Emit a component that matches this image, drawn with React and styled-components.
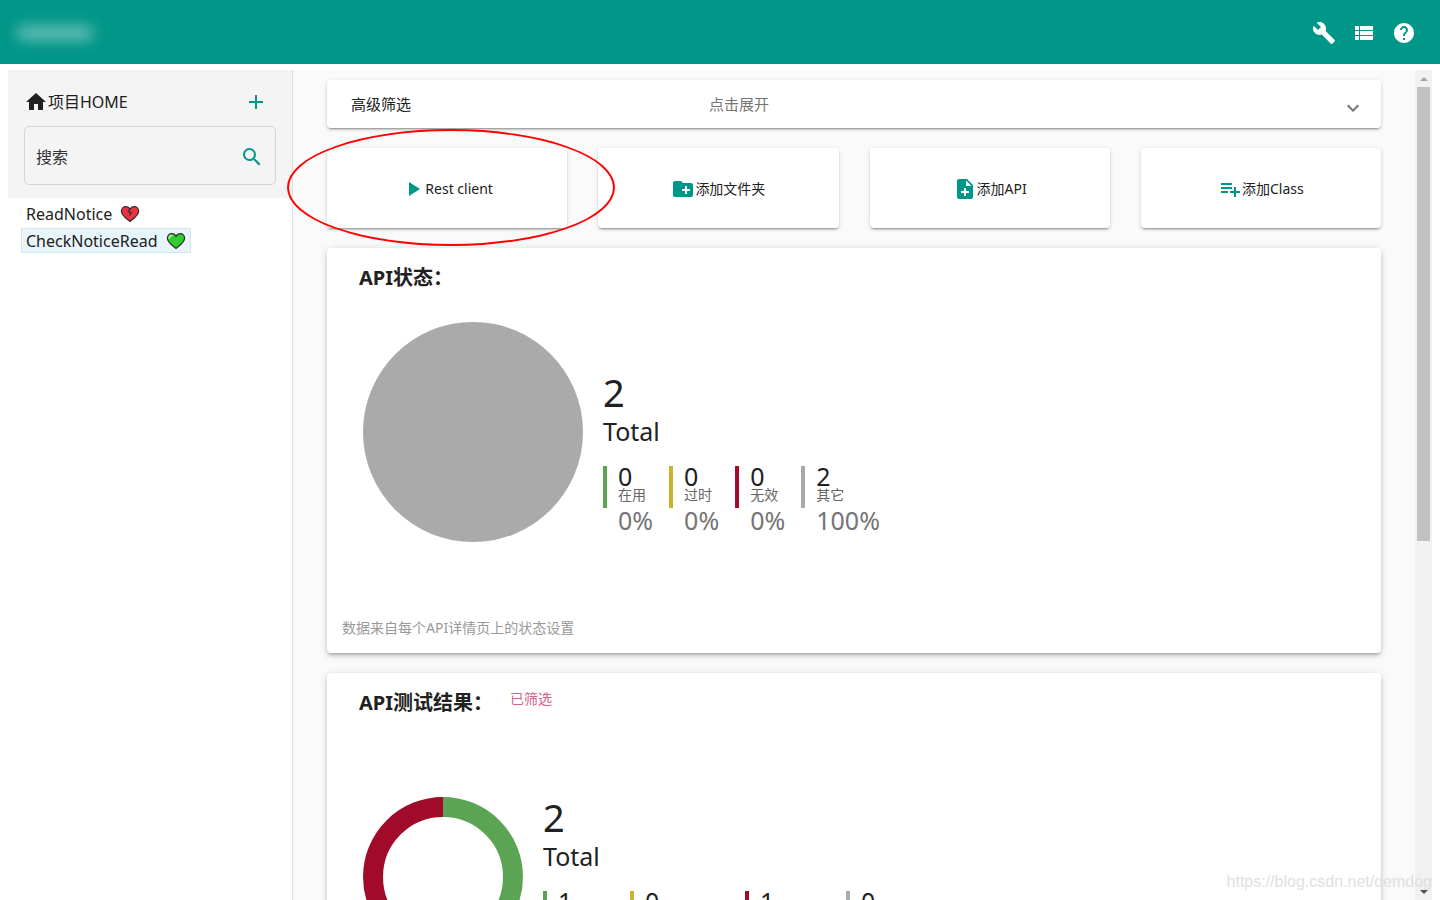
import React from "react";
import styled, { createGlobalStyle, css } from "styled-components";
import {
  MdAdd,
  MdBuild,
  MdCreateNewFolder,
  MdHelp,
  MdHome,
  MdKeyboardArrowDown,
  MdNoteAdd,
  MdPlayArrow,
  MdPlaylistAdd,
  MdSearch,
  MdViewList,
} from "react-icons/md";

const green = "#5aa454";
const yellow = "#c7b42c";
const red = "#a10a28";
const grey = "#aaaaaa";

const statusStats = [
  { value: 0, label: "在用", percent: "0%", color: green },
  { value: 0, label: "过时", percent: "0%", color: yellow },
  { value: 0, label: "无效", percent: "0%", color: red },
  { value: 2, label: "其它", percent: "100%", color: grey },
];

const testStats = [
  { value: 1, color: green, width: 56 },
  { value: 0, color: yellow, width: 84 },
  { value: 1, color: red, width: 70 },
  { value: 0, color: grey, width: 56 },
];

const Heart = ({ color, shine, broken }) => (
  <HeartSvg viewBox="0 0 20 18" aria-hidden="true">
    <path
      d="M10 16.4C6.6 13.6 1.4 10.4 1.4 6.2 1.4 3.5 3.4 1.7 5.7 1.7 7.7 1.7 9.2 2.8 10 4.4 10.8 2.8 12.3 1.7 14.3 1.7c2.3 0 4.3 1.8 4.3 4.5 0 4.2-5.2 7.4-8.6 10.2Z"
      fill={color}
      stroke="#303030"
      strokeWidth="1.3"
      strokeLinejoin="round"
    />
    {broken ? (
      <path
        d="M10 4.4 8.3 6.6l3 1.2-2 2.6"
        fill="none"
        stroke="#303030"
        strokeWidth="1.3"
      />
    ) : (
      <path
        d="M3.2 6.4C3.2 4.6 4.4 3.5 6 3.5"
        fill="none"
        stroke={shine}
        strokeWidth="1.4"
        strokeLinecap="round"
      />
    )}
  </HeartSvg>
);

const Stats = ({ total, items, top }) => (
  <StatsBlock $top={top}>
    <TotalValue>{total}</TotalValue>
    <TotalLabel>Total</TotalLabel>
    <StatList>
      {items.map((item, i) => (
        <Stat key={i} $color={item.color} $width={item.width}>
          <StatValue>{item.value}</StatValue>
          {item.label && <StatLabel>{item.label}</StatLabel>}
          {item.percent && <StatPercent>{item.percent}</StatPercent>}
        </Stat>
      ))}
    </StatList>
  </StatsBlock>
);

const App = () => {
  return (
    <>
      <GlobalStyle />
      <Page>
        <Header>
          <BlurredLogo />
          <HeaderIcons>
            <IconButton aria-label="build">
              <MdBuild />
            </IconButton>
            <IconButton aria-label="list">
              <MdViewList />
            </IconButton>
            <IconButton aria-label="help">
              <MdHelp />
            </IconButton>
          </HeaderIcons>
        </Header>

        <Body>
          <Sidebar>
            <SidebarTop>
              <HomeRow>
                <HomeLink href="#home">
                  <MdHome />
                  项目HOME
                </HomeLink>
                <IconButton aria-label="add" $accent>
                  <MdAdd />
                </IconButton>
              </HomeRow>
              <SearchBox>
                <SearchInput placeholder="搜索" aria-label="搜索" />
                <IconButton aria-label="search" $accent>
                  <MdSearch />
                </IconButton>
              </SearchBox>
            </SidebarTop>
            <Tree>
              <TreeItem href="#read">
                ReadNotice <Heart color="#ee3042" broken />
              </TreeItem>
              <TreeItem href="#check" $selected>
                CheckNoticeRead <Heart color="#2fcf2f" shine="#b6f5a8" />
              </TreeItem>
            </Tree>
          </Sidebar>

          <Content>
            <FilterPanel>
              <FilterTitle>高级筛选</FilterTitle>
              <FilterHint>点击展开</FilterHint>
              <MdKeyboardArrowDown />
            </FilterPanel>

            <Actions>
              <ActionButton>
                <MdPlayArrow />
                Rest client
                <RedCircle />
              </ActionButton>
              <ActionButton>
                <MdCreateNewFolder />
                添加文件夹
              </ActionButton>
              <ActionButton>
                <MdNoteAdd />
                添加API
              </ActionButton>
              <ActionButton>
                <MdPlaylistAdd />
                添加Class
              </ActionButton>
            </Actions>

            <Card>
              <CardHeader>
                <CardTitle>API状态：</CardTitle>
              </CardHeader>
              <ChartRow $space={30}>
                <Chart $size={220} viewBox="0 0 220 220">
                  <circle cx="110" cy="110" r="110" fill={grey} />
                </Chart>
                <Stats total={2} items={statusStats} top={50} />
              </ChartRow>
              <Note>数据来自每个API详情页上的状态设置</Note>
            </Card>

            <Card>
              <CardHeader>
                <CardTitle>API测试结果：</CardTitle>
                <Filtered>已筛选</Filtered>
              </CardHeader>
              <ChartRow $space={80}>
                <Chart $size={160} viewBox="0 0 160 160">
                  <g fill="none" strokeWidth="20">
                    <path d="M80 10a70 70 0 0 1 0 140" stroke={green} />
                    <path d="M80 150a70 70 0 0 1 0-140" stroke={red} />
                  </g>
                </Chart>
                <Stats total={2} items={testStats} top={0} />
              </ChartRow>
            </Card>
          </Content>

          <Scrollbar>
            <Arrow />
            <Track>
              <Thumb />
            </Track>
            <Arrow $down />
          </Scrollbar>
        </Body>
        <Watermark>https://blog.csdn.net/demdog</Watermark>
      </Page>
    </>
  );
};

const GlobalStyle = createGlobalStyle`
  * {
    box-sizing: border-box;
  }
  body {
    margin: 0;
    background: #fff;
    color: #212121;
    font-family: "Noto Sans", "Noto Sans CJK SC", sans-serif;
    font-size: 16px;
  }
  button, input {
    font: inherit;
    color: inherit;
  }
  a {
    color: inherit;
    text-decoration: none;
  }
`;

const Page = styled.div`
  display: flex;
  flex-direction: column;
  height: 100vh;
  overflow: hidden;
  position: relative;
`;

const Header = styled.header`
  display: flex;
  align-items: center;
  justify-content: space-between;
  flex: none;
  height: 64px;
  padding: 2px 24px 0 16px;
  background: #009688;
  color: #fff;
`;

const BlurredLogo = styled.div`
  width: 78px;
  height: 16px;
  border-radius: 8px;
  background: rgba(255, 255, 255, 0.36);
  filter: blur(7px);
`;

const HeaderIcons = styled.div`
  display: flex;
  gap: 16px;
`;

const IconButton = styled.button`
  display: flex;
  padding: 0;
  border: none;
  background: transparent;
  color: ${(props) => (props.$accent ? "#009688" : "#fff")};
  font-size: 24px;
`;

const Body = styled.div`
  display: grid;
  grid-template-columns: 285px 1fr 17px;
  grid-template-rows: minmax(0, 1fr);
  flex: 1;
  min-height: 0;
  padding: 6px 8px 0;
`;

const Sidebar = styled.aside`
  border-right: 1px solid #e0e0e0;
`;

const SidebarTop = styled.div`
  height: 128px;
  padding: 20px 16px 0;
  background: #f4f4f4;
`;

const HomeRow = styled.div`
  display: flex;
  align-items: center;
  justify-content: space-between;
  height: 24px;
  margin-bottom: 12px;
  padding-right: 8px;
`;

const HomeLink = styled.a`
  display: flex;
  align-items: center;
  line-height: 24px;

  svg {
    font-size: 24px;
  }
`;

const SearchBox = styled.div`
  display: flex;
  align-items: center;
  height: 59px;
  padding: 2px 11px 0;
  border: 1px solid #d4d4d4;
  border-radius: 5px;
`;

const SearchInput = styled.input`
  flex: 1;
  min-width: 0;
  padding: 0;
  border: none;
  outline: none;
  background: transparent;

  &::placeholder {
    color: #333;
    opacity: 1;
  }
`;

const Tree = styled.nav`
  display: flex;
  flex-direction: column;
  align-items: flex-start;
  gap: 2px;
  padding: 3px 13px;
`;

const TreeItem = styled.a`
  display: flex;
  align-items: center;
  gap: 8px;
  height: 25px;
  padding: 0 4px;
  border: 1px solid transparent;
  ${(props) =>
    props.$selected &&
    css`
      background: #e7f4f9;
      border-color: #d3e6ee;
    `}
`;

const HeartSvg = styled.svg`
  width: 20px;
  height: 18px;
`;

const Content = styled.main`
  display: flex;
  flex-direction: column;
  gap: 20px;
  min-width: 0;
  padding: 10px 34px 0;
  background: #fafafa;
  /* the red mark reaches over the sidebar edge */
  overflow: clip;
  overflow-clip-margin: 8px;
`;

const panel = css`
  background: #fff;
  border-radius: 4px;
  box-shadow: 0 3px 1px -2px rgba(0, 0, 0, 0.2),
    0 2px 2px 0 rgba(0, 0, 0, 0.14), 0 1px 5px 0 rgba(0, 0, 0, 0.12);
`;

const FilterPanel = styled.button`
  ${panel}
  display: flex;
  align-items: center;
  flex: none;
  height: 48px;
  padding: 0 16px 2px 24px;
  border: none;
  font-size: 15px;
  text-align: left;

  svg {
    margin-top: 10px;
    font-size: 24px;
    color: #757575;
  }
`;

const FilterTitle = styled.span`
  flex: 0 0 358px;
`;

const FilterHint = styled.span`
  flex: 1;
  color: #757575;
`;

const Actions = styled.div`
  display: grid;
  grid-template-columns: repeat(4, 1fr);
  gap: 31px;
  flex: none;
`;

const ActionButton = styled.button`
  ${panel}
  display: flex;
  align-items: center;
  justify-content: center;
  position: relative;
  height: 80px;
  padding: 0;
  border: none;
  font-size: 14px;

  svg {
    margin-top: 2px;
    font-size: 24px;
    color: #009688;
  }
`;

const RedCircle = styled.span`
  position: absolute;
  z-index: 1;
  top: -19px;
  left: -40px;
  width: 328px;
  height: 117px;
  border: 2px solid #f00;
  border-radius: 50%;
`;

const Card = styled.section`
  ${panel}
  flex: none;
  padding: 16px 15px 15px;
  box-shadow: 0 3px 3px -2px rgba(0, 0, 0, 0.2),
    0 3px 4px 0 rgba(0, 0, 0, 0.14), 0 1px 8px 0 rgba(0, 0, 0, 0.12);
`;

const CardHeader = styled.div`
  display: flex;
  gap: 17px;
  padding-left: 17px;
`;

const CardTitle = styled.h3`
  margin: 0;
  font-size: 20px;
  line-height: 28px;
`;

const Filtered = styled.span`
  color: #d8608c;
  font-size: 14px;
  line-height: 20px;
`;

const ChartRow = styled.div`
  display: flex;
  gap: 20px;
  margin-top: ${(props) => props.$space}px;
  padding-left: 21px;
`;

const Chart = styled.svg`
  flex: none;
  width: ${(props) => props.$size}px;
  height: ${(props) => props.$size}px;
`;

const StatsBlock = styled.div`
  padding-top: ${(props) => props.$top}px;
`;

const TotalValue = styled.div`
  font-size: 38px;
  line-height: 40px;
`;

const TotalLabel = styled.div`
  margin-bottom: 16px;
  font-size: 25px;
  line-height: 38px;
`;

const StatList = styled.div`
  display: flex;
  gap: 16px;
`;

const Stat = styled.div`
  min-width: ${(props) => (props.$width || 0) + 15}px;
  padding-left: 15px;
  background: linear-gradient(
      ${(props) => props.$color},
      ${(props) => props.$color}
    )
    left top / 4px 42px no-repeat;
`;

const StatValue = styled.div`
  font-size: 25px;
  line-height: 20px;
`;

const StatLabel = styled.div`
  color: #666;
  font-size: 14px;
  line-height: 18px;
`;

const StatPercent = styled.div`
  color: #757575;
  font-size: 25px;
  line-height: 32px;
`;

const Note = styled.div`
  margin-top: 76px;
  color: #999;
  font-size: 14px;
  line-height: 20px;
`;

const Scrollbar = styled.div`
  display: flex;
  flex-direction: column;
  background: #f1f1f1;
`;

const Arrow = styled.div`
  display: grid;
  place-items: center;
  height: 17px;

  &::after {
    content: "";
    border: 4px solid transparent;
    ${(props) =>
      props.$down
        ? "border-top-color: #505050; border-bottom: 0;"
        : "border-bottom-color: #a3a3a3; border-top: 0;"}
  }
`;

const Track = styled.div`
  flex: 1;
  padding: 0 2px;
`;

const Thumb = styled.div`
  height: 57%;
  background: #c1c1c1;
`;

const Watermark = styled.div`
  position: absolute;
  right: 8px;
  bottom: 8px;
  color: #e0e0e0;
  font-family: "Liberation Sans", sans-serif;
  font-size: 16px;
  line-height: 20px;
`;

export default App;
